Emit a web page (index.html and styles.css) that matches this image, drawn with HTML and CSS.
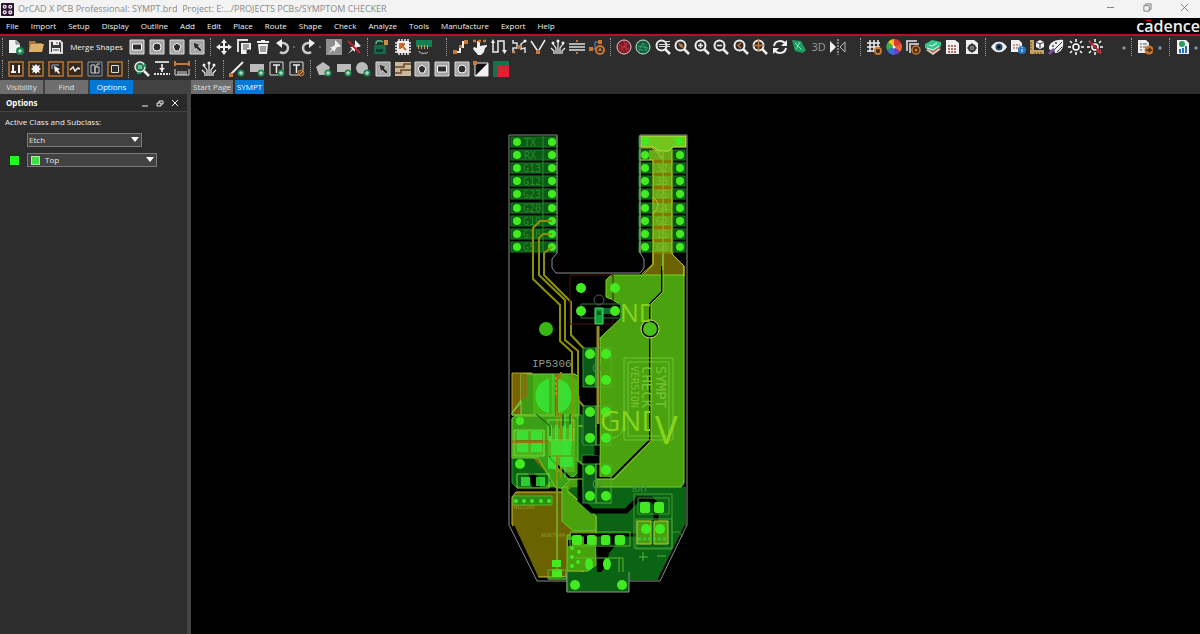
FILE: index.html
```html
<!DOCTYPE html>
<html lang="en">
<head>
  <meta charset="utf-8">
  <meta name="viewport" content="width=device-width, initial-scale=1">
  <link rel="stylesheet" href="styles.css">
  <title>OrCAD X PCB Professional: SYMPT.brd</title>
</head>
<body>

<!-- icon sprite -->
<svg class="sprite" aria-hidden="true">
  <symbol id="new" viewBox="0 0 16 16"><path class="w" d="M1 1h7l4 4v9H1z"/><path d="M8 1v4h4" fill="#bbb" stroke="#777"/><circle cx="12" cy="12" r="4" fill="#1b8a52"/><path class="ws" d="M12 10v4M10 12h4"/></symbol>
  <symbol id="open" viewBox="0 0 16 16"><path fill="#a9783c" d="M1 2h6l1 2h6v9H1z"/><path fill="#e0b068" d="M3 5h13l-2 8H1z"/></symbol>
  <symbol id="save" viewBox="0 0 16 16"><path fill="#3a3a3a" stroke="#ddd" stroke-width="2" d="M2 2h10l2 2v10H2z"/><path class="w" d="M5 2h6v4H5zM4 9h8v5H4z"/><path stroke="#444" d="M5 11h6M9 3v2"/></symbol>
  <symbol id="box" viewBox="0 0 16 16"><path fill="#a5a5a5" stroke="#ddd" d="M1 1h14v14H1z"/></symbol>
  <symbol id="b-rect" viewBox="0 0 16 16"><use href="#box"/><path fill="#2d2d2d" stroke="#fff" d="M3.500 5h9v6h-9z"/></symbol>
  <symbol id="b-circle" viewBox="0 0 16 16"><use href="#box"/><circle cx="8" cy="8" r="4" fill="#2d2d2d" stroke="#fff"/></symbol>
  <symbol id="b-penta" viewBox="0 0 16 16"><use href="#box"/><path fill="#2d2d2d" stroke="#fff" d="M8 4l4 3-2 5H6L4 7z"/></symbol>
  <symbol id="b-arrow" viewBox="0 0 16 16"><use href="#box"/><path fill="#2d2d2d" stroke="#fff" stroke-width=".5" d="M4 3l8 3-3 1 4 4-2 2-4-4-1 3z"/></symbol>
  <symbol id="move" viewBox="0 0 16 16"><path class="ws2" d="M8 2v12M2 8h12"/><path class="w" d="M8 0l3 4H5zM8 16l3-4H5zM0 8l4-3v6zM16 8l-4-3v6z"/></symbol>
  <symbol id="copy" viewBox="0 0 16 16"><path fill="none" stroke="#ddd" stroke-width="2" d="M2 13V1h10"/><path class="w" d="M5 4h10v7l-4 4H5z"/><path stroke="#444" d="M7 6h6M7 8h6M7 10h4M11 15v-4h4"/></symbol>
  <symbol id="trash" viewBox="0 0 16 16"><path class="w" d="M2 2h4V1h4v1h4v2H2zM3 5h10l-1 10H4z"/><path stroke="#555" d="M6 7v6M8 7v6M10 7v6"/></symbol>
  <symbol id="undo" viewBox="0 0 22 16"><path fill="none" stroke="#ccc" stroke-width="2.500" d="M5 4h3a5 5 0 1 1-3 9"/><path class="w" d="M1 4l6-4v9z"/><circle cx="19" cy="8" r="1" fill="#777"/></symbol>
  <symbol id="redo" viewBox="0 0 22 16"><path fill="none" stroke="#ccc" stroke-width="2.500" d="M10 4H7a5 5 0 1 0 3 9"/><path class="w" d="M14 4L8 0v9z"/><circle cx="19" cy="8" r="1" fill="#777"/></symbol>
  <symbol id="pin" viewBox="0 0 16 16"><path class="w" d="M9 1l6 6-2 1-2 0-2 3 0 2-2-2-5 4 4-5-2-2 2 0 3-2 0-3z"/></symbol>
  <symbol id="unpin" viewBox="0 0 16 16"><use href="#pin"/><path stroke="#c02030" stroke-width="2" d="M2 2l12 12"/></symbol>
  <symbol id="boardIcon" viewBox="0 0 16 16"><path fill="#17694a" d="M1 6h12v9H1z"/><path fill="#0b3f2c" d="M3 10h7v3H3z"/><path fill="#d08a4a" d="M11 1h4v5h-4z"/><path fill="none" stroke="#4fbf86" stroke-width="1.500" d="M3 5c0-4 4-4 7-2"/></symbol>
  <symbol id="chip" viewBox="0 0 16 16"><path stroke="#eee" stroke-width="1.500" d="M4 0v16M7 0v16M10 0v16M13 0v16M0 4h16M0 7h16M0 10h16M0 13h16"/><path class="w" d="M2 2h12v12H2z"/><path stroke="#d06a28" stroke-width="2" d="M5 5l6 6M5 10V5h5"/></symbol>
  <symbol id="module" viewBox="0 0 16 16"><path fill="#168055" d="M0 1h16v7H0z"/><path stroke="#e0a050" stroke-width="4" stroke-dasharray="1 2" d="M2 8h12"/><path fill="none" stroke="#ccc" d="M3 12c0 3 8 3 9 1"/></symbol>
  <symbol id="route" viewBox="0 0 16 16"><path fill="none" stroke="#eee" stroke-width="2" d="M3 13h5V8h3V3h3"/><path class="o" d="M1 11h4v4H1zM12 1h4v4h-4zM7 6h3v3H7z"/></symbol>
  <symbol id="slide" viewBox="0 0 16 16"><path class="w" d="M5 2h3v5l6-1c2 0 1 2-1 3l-1 4-3 3H6l-5-6 1-2 3 1z"/><path stroke="#c87832" stroke-width="2.500" stroke-dasharray="3 2" d="M1 2h15"/></symbol>
  <symbol id="tune" viewBox="0 0 16 16"><path fill="none" stroke="#eee" stroke-width="1.500" d="M2 2v11h5V2h6v10"/><path class="w" d="M0 4l2-4 2 4zM11 11h5l-2.500 4z"/></symbol>
  <symbol id="pair" viewBox="0 0 16 16"><path fill="none" stroke="#ddd" stroke-width="1.500" d="M2 14V9h4V4H2V1M14 14V9l-4 1V5l4-3"/><circle cx="3" cy="13" r="1.500" class="o"/><circle cx="8" cy="8" r="2" class="o"/><circle cx="14" cy="2" r="1.500" class="w"/></symbol>
  <symbol id="vee" viewBox="0 0 16 16"><path fill="none" stroke="#eee" stroke-width="1.500" d="M1 2l6 9 1 2 1-2 6-10"/><path class="o" d="M6 11h4v4H6z"/></symbol>
  <symbol id="fan" viewBox="0 0 16 16"><path fill="none" stroke="#eee" stroke-width="1.200" d="M8 15V3M6 15V9L3 5M10 15V9l3-4M4 15v-3L1 9M12 15v-3l3-3"/><circle cx="8" cy="2" r="1.500" class="w"/><circle cx="3" cy="4" r="1.500" class="w"/><circle cx="13" cy="4" r="1.500" class="w"/></symbol>
  <symbol id="lines" viewBox="0 0 16 16"><path stroke="#ddd" stroke-width="1.500" d="M0 5h16M0 8h16M0 11h16"/><path class="o" d="M7 1h2v2H7zM7 13h2v2H7z"/></symbol>
  <symbol id="rdelay" viewBox="0 0 16 16"><path fill="none" stroke="#5d8cd0" d="M2 10h4V3h5"/><path class="o" d="M0 8h4v4H0zM9 1h4v4H9z"/><circle cx="11" cy="11" r="4" fill="none" stroke="#c87832" stroke-width="2"/><path class="o" d="M11 8l2 4H9z"/></symbol>
  <symbol id="net-r" viewBox="0 0 16 16"><circle cx="8" cy="8" r="7" fill="#7d1b27" stroke="#e8c8c8"/><path stroke="#b83244" fill="none" d="M3 6l10 4M5 13l6-10M8 2l3 11M3 10l9-5"/></symbol>
  <symbol id="net-g" viewBox="0 0 16 16"><circle cx="8" cy="8" r="7" fill="#155c3c" stroke="#cde8d8"/><path stroke="#35a070" fill="none" d="M4 11l4-7 4 7zM3 7l10 2"/></symbol>
  <symbol id="lens" viewBox="0 0 16 16"><circle cx="6.500" cy="6.500" r="5" fill="none" stroke="#eee" stroke-width="2"/><path stroke="#eee" stroke-width="2.500" d="M10 10l5 5"/></symbol>
  <symbol id="z-fit" viewBox="0 0 16 16"><use href="#lens"/><path stroke="#ddd" d="M4 5.500h11M4 7.500h11M10 2.500h5"/></symbol>
  <symbol id="z-box" viewBox="0 0 16 16"><use href="#lens"/><path class="o" d="M4 4l4 1 2 4-4-1z"/></symbol>
  <symbol id="z-in" viewBox="0 0 16 16"><use href="#lens"/><path stroke="#eee" stroke-width="1.500" d="M6.500 4v5M4 6.500h5"/></symbol>
  <symbol id="z-out" viewBox="0 0 16 16"><use href="#lens"/><path stroke="#eee" stroke-width="1.500" d="M4 6.500h5"/></symbol>
  <symbol id="z-prev" viewBox="0 0 16 16"><use href="#lens"/><path fill="none" stroke="#d07838" stroke-width="1.500" d="M8 4L5 6.500 8 9"/></symbol>
  <symbol id="z-ctr" viewBox="0 0 16 16"><use href="#lens"/><path stroke="#c87832" stroke-width="1.500" d="M6.500 1v11M1 6.500h11"/></symbol>
  <symbol id="refresh" viewBox="0 0 16 16"><path fill="none" stroke="#eee" stroke-width="2" d="M2 7c1-6 8-6 11-3M14 9c-1 6-8 6-11 3"/><path class="w" d="M15 1v6H9zM1 15V9h6z"/></symbol>
  <symbol id="flipb" viewBox="0 0 16 16"><path fill="#1d9b62" d="M1 1l9 1 5 9-3 3-8-2z"/><path stroke="#7fe0b0" fill="none" d="M4 4l7 7M9 3l-4 7"/></symbol>
  <symbol id="mirror" viewBox="0 0 16 16"><path class="w" d="M0 2l6 6-6 6z"/><path fill="none" stroke="#bbb" d="M15 3l-5 5 5 5z"/><path stroke="#ddd" stroke-dasharray="2 1" d="M8 0v16"/></symbol>
  <symbol id="grid" viewBox="0 0 16 16"><path fill="none" stroke="#eee" stroke-width="1.500" d="M4 1v12M8 1v12M12 1v7M1 4h13M1 8h13M1 12h7"/><circle cx="12" cy="12" r="3" fill="#2d2d2d" stroke="#c87832" stroke-width="2"/></symbol>
  <symbol id="wheel" viewBox="0 0 16 16"><path fill="#e33a2e" d="M8 8V0a8 8 0 0 1 7 4z"/><path fill="#e86034" d="M8 8l7-4a8 8 0 0 1-1 9z"/><path fill="#6d3fd0" d="M8 8l6 5a8 8 0 0 1-6 3z"/><path fill="#2a73d8" d="M8 8v8a8 8 0 0 1-7-5z"/><path fill="#32b34a" d="M8 8l-7 3a8 8 0 0 1 1-8z"/><path fill="#f3c52b" d="M8 8L2 3a8 8 0 0 1 6-3z"/><circle cx="8" cy="8" r="1.500" fill="#eee"/></symbol>
  <symbol id="shadow" viewBox="0 0 16 16"><path fill="none" stroke="#bbb" stroke-width="2" d="M2 12V2h10M5 14V5h9"/><circle cx="11" cy="11" r="4" fill="#4a2f18" stroke="#c87832" stroke-width="1.500"/><circle cx="11" cy="11" r="1.500" class="o"/></symbol>
  <symbol id="layers" viewBox="0 0 16 16"><path fill="#e0d8c0" d="M1 11l8-3 7 2-8 6z"/><path fill="#c85f5a" d="M1 9l7-3 8 2-8 6z"/><path fill="#38c48a" d="M0 5l7-4 9 2v4l-8 5-8-3z"/><path stroke="#d9fff0" fill="none" d="M4 6l3 1 5-3M2 9l6 2 6-4"/></symbol>
  <symbol id="table" viewBox="0 0 16 16"><path class="w" d="M2 1h9l4 3v11H2z"/><path stroke="#a04030" stroke-width="1.500" d="M4 7h9M4 10h9M4 13h9" stroke-dasharray="2 1"/></symbol>
  <symbol id="docset" viewBox="0 0 16 16"><path class="w" d="M2 1h8l4 3v11H2z"/><circle cx="8" cy="9" r="3" fill="none" stroke="#333" stroke-width="2"/><path stroke="#333" d="M8 4v10M3 9h10"/></symbol>
  <symbol id="eye" viewBox="0 0 16 16"><path class="w" d="M0 8c4-7 12-7 16 0-4 7-12 7-16 0z"/><circle cx="8" cy="8" r="3.500" fill="#24486e"/><circle cx="8" cy="8" r="1.500" fill="#111"/></symbol>
  <symbol id="info" viewBox="0 0 16 16"><path class="w" d="M1 1h8l3 3v9H1z"/><path stroke="#a04030" d="M3 6h7M3 9h6" stroke-dasharray="2 1"/><circle cx="12" cy="11" r="4" fill="#2478c8"/><path class="ws" d="M12 10v3M12 8v1"/></symbol>
  <symbol id="ruler" viewBox="0 0 16 16"><path fill="#c8a060" d="M1 1h4v10h10v4H1z"/><path stroke="#553" d="M1 4h2M1 7h2M1 10h2M6 15v-2M9 15v-2M12 15v-2"/><path class="w" d="M11 1l4 2v5l-4 2-4-2V3z"/><path stroke="#333" fill="none" d="M7 3l4 2 4-2M11 5v4"/></symbol>
  <symbol id="brush" viewBox="0 0 16 16"><path class="w" d="M1 9c0-6 8-9 14-8 1 7-1 12-7 13-2 0-1-2-2-3-2 0-5 1-5-2z"/><path stroke="#333" d="M6 11l8-8M9 13l5-5"/><circle cx="5" cy="7" r="1" fill="#444"/><circle cx="8" cy="4" r="1" fill="#444"/><path stroke="#7a4fb0" stroke-width="2.500" d="M1 15l5-5"/></symbol>
  <symbol id="sun" viewBox="0 0 16 16"><circle cx="8" cy="8" r="3" fill="none" stroke="#fff" stroke-width="1.500"/><path stroke="#fff" stroke-width="1.500" d="M8 0v3M8 13v3M0 8h3M13 8h3M2 2l2 2M12 12l2 2M14 2l-2 2M4 12l-2 2"/></symbol>
  <symbol id="sunoff" viewBox="0 0 16 16"><use href="#sun"/><path stroke="#c02838" stroke-width="2" d="M2 2l12 12M10 14l4-3"/></symbol>
  <symbol id="export" viewBox="0 0 16 16"><path class="w" d="M1 1h8l3 3v10H1z"/><path stroke="#555" d="M3 5h2M3 8h2M3 11h2M6 5h4M6 8h3"/><circle cx="12" cy="11" r="4.500" fill="#c87832"/><path stroke="#4a2a10" stroke-width="1.500" fill="none" d="M9 11h5l-2-2M14 11l-2 2"/></symbol>
  <symbol id="report" viewBox="0 0 16 16"><path class="w" d="M2 1h9l3 3v11H2z"/><circle cx="7" cy="5" r="3" fill="#2a9a5a"/><path fill="#2a70c0" d="M4 10h2v4H4zM7 9h2v5H7zM10 7h2v7h-2z"/></symbol>

  <symbol id="ob" viewBox="0 0 16 16"><path fill="#35291f" stroke="#b87436" stroke-width="1.500" d="M1 1h14v14H1z"/></symbol>
  <symbol id="o-sym" viewBox="0 0 16 16"><use href="#ob"/><path class="w" d="M4 4h2v6H4zM3 10h5v2H3zM10 4h2v8h-2z"/></symbol>
  <symbol id="o-pad" viewBox="0 0 16 16"><use href="#ob"/><path class="w" d="M8 3l1.500 2L12 4l-1 2.500L13 8l-2 1.500 1 2.500-2.500-1L8 13l-1.500-2L4 12l1-2.500L3 8l2-1.500L4 4l2.500 1z"/></symbol>
  <symbol id="o-lasso" viewBox="0 0 16 16"><use href="#ob"/><path fill="none" stroke="#8fb0e0" d="M4 8V4h7"/><path class="w" d="M6 5l6 3-2 1 2 3-1 1-3-3-1 2z"/></symbol>
  <symbol id="o-wave" viewBox="0 0 16 16"><use href="#ob"/><path fill="none" stroke="#eee" stroke-width="1.500" d="M3 9l3-3 2 4 3-3 2 1"/></symbol>
  <symbol id="o-copy" viewBox="0 0 16 16"><path fill="#252b2e" stroke="#90989c" d="M1 1h14v14H1z"/><path fill="none" stroke="#ccc" d="M4 4h4v8H4zM8 6h4v6H8zM10 6V3h3"/></symbol>
  <symbol id="o-sq" viewBox="0 0 16 16"><use href="#ob"/><path fill="#2d2d2d" stroke="#ddd" d="M4.500 4.500h7v7h-7z"/></symbol>
  <symbol id="find" viewBox="0 0 16 16"><circle cx="6" cy="6" r="5" fill="#456a58" stroke="#ddf0e4" stroke-width="1.500"/><path stroke="#eee" stroke-width="2.500" d="M10 10l5 5"/><path fill="#49d28c" d="M4 4h4v4H4z"/><path stroke="#2aa060" stroke-width="2" d="M11 3v3M3 12h4"/></symbol>
  <symbol id="dim" viewBox="0 0 16 16"><path stroke="#fff" stroke-width="1.500" d="M1 1h14M8 3v8"/><path class="w" d="M8 10l3-3H5z"/><path stroke="#ddd" stroke-width="2" stroke-dasharray="2 1" d="M0 13h16"/></symbol>
  <symbol id="meas" viewBox="0 0 16 16"><path stroke="#c87832" stroke-width="2" d="M1 3h14"/><path class="o" d="M0 0h2v5H0zM14 0h2v5h-2z"/><path fill="none" stroke="#ddd" d="M1 8v6h14V8M4 10v4M6 10v4M8 10v4M10 10v4M12 10v4"/></symbol>
  <symbol id="plus" viewBox="0 0 16 16"><circle cx="12" cy="12" r="3.500" fill="#1b8a52"/><path class="ws" d="M12 10v4M10 12h4"/></symbol>
  <symbol id="a-line" viewBox="0 0 16 16"><path class="ws2" d="M2 13L14 1"/><path class="o" d="M0 12h4v4H0z"/><use href="#plus"/></symbol>
  <symbol id="a-rect" viewBox="0 0 16 16"><path fill="#bbb" d="M1 3h14v8H1z"/><use href="#plus"/></symbol>
  <symbol id="a-text" viewBox="0 0 16 16"><path fill="none" stroke="#ddd" d="M1 1h13v13H1z"/><path fill="none" stroke="#eee" stroke-width="1.500" d="M4 4h7M7.500 4v8"/><use href="#plus"/></symbol>
  <symbol id="a-edit" viewBox="0 0 16 16"><path fill="none" stroke="#ddd" d="M1 1h13v13H1z"/><path fill="none" stroke="#eee" stroke-width="1.500" d="M4 4h7M7.500 4v8"/><circle cx="12" cy="12" r="3" fill="#6a4520" stroke="#c87832"/><path stroke="#e0a060" d="M10 14l4-4"/></symbol>
  <symbol id="a-penta" viewBox="0 0 16 16"><path fill="#bbb" d="M7 1l7 5-3 8H3L0 6z"/><use href="#plus"/></symbol>
  <symbol id="a-circle" viewBox="0 0 16 16"><circle cx="7" cy="7" r="6" fill="#bbb"/><use href="#plus"/></symbol>
  <symbol id="stair" viewBox="0 0 16 16"><path fill="#c8b8a0" d="M0 1h16v14H0z"/><path fill="none" stroke="#6e4320" stroke-width="1.500" d="M0 6h9V3h7M0 12h6V9h10"/></symbol>
  <symbol id="contrast" viewBox="0 0 16 16"><path fill="#111" stroke="#eee" d="M2 2h13v13H2z"/><path class="w" d="M15 2v13H2z"/><path class="o" d="M0 0h4v4H0z"/></symbol>
  <symbol id="drc" viewBox="0 0 16 16"><path fill="#15734a" d="M0 0h16v16H0z"/><path fill="#e02030" d="M5 5h11v11H5z"/><path stroke="#a04030" d="M6 13L9 3M10 13l3-10"/></symbol>
</svg>

<header class="titlebar">
  <svg class="appIcon" viewBox="0 0 14 14"><rect width="14" height="14" rx="1" fill="#2b1530"/><g fill="none" stroke="#f0e8f0" stroke-width="1.500"><circle cx="4" cy="4" r="1.500"/><circle cx="10" cy="4" r="1.500"/><circle cx="4" cy="10" r="1.500"/><circle cx="10" cy="10" r="1.500"/></g></svg>
  <span class="title">OrCAD X PCB Professional: SYMPT.brd&nbsp; Project: E:.../PROJECTS PCBs/SYMPTOM CHECKER</span>
  <div class="windowBtns">
    <button aria-label="Minimize"><svg viewBox="0 0 10 10"><path d="M1 5h8"/></svg></button>
    <button aria-label="Restore"><svg viewBox="0 0 10 10"><path d="M1 3h6v6H1zM3 3V1h6v6H7"/></svg></button>
    <button aria-label="Close"><svg viewBox="0 0 10 10"><path d="M1 1l8 8M9 1L1 9"/></svg></button>
  </div>
</header>

<nav class="menubar">
  <a href="#">File</a><a href="#">Import</a><a href="#">Setup</a><a href="#">Display</a><a href="#">Outline</a><a href="#">Add</a><a href="#">Edit</a><a href="#">Place</a><a href="#">Route</a><a href="#">Shape</a><a href="#">Check</a><a href="#">Analyze</a><a href="#">Tools</a><a href="#">Manufacture</a><a href="#">Export</a><a href="#">Help</a>
  <span class="brand">c<span class="macron">a</span>dence</span>
</nav>

<div class="toolbars">
  <div class="toolbar mainTools">
    <div class="group">
      <button aria-label="New"><svg><use href="#new"/></svg></button>
      <button aria-label="Open"><svg><use href="#open"/></svg></button>
      <button aria-label="Save"><svg><use href="#save"/></svg></button>
      <button class="textBtn">Merge Shapes</button>
      <button aria-label="Merge rectangle"><svg><use href="#b-rect"/></svg></button>
      <button aria-label="Merge circle"><svg><use href="#b-circle"/></svg></button>
      <button aria-label="Merge polygon"><svg><use href="#b-penta"/></svg></button>
      <button aria-label="Merge select"><svg><use href="#b-arrow"/></svg></button>
    </div>
    <div class="group">
      <button aria-label="Move"><svg><use href="#move"/></svg></button>
      <button aria-label="Copy"><svg><use href="#copy"/></svg></button>
      <button aria-label="Delete"><svg><use href="#trash"/></svg></button>
      <button class="wide" aria-label="Undo"><svg><use href="#undo"/></svg></button>
      <button class="wide" aria-label="Redo"><svg><use href="#redo"/></svg></button>
      <button class="pressed" aria-label="Fix"><svg><use href="#pin"/></svg></button>
      <button aria-label="Unfix"><svg><use href="#unpin"/></svg></button>
    </div>
    <div class="group loose">
      <button aria-label="Place board"><svg><use href="#boardIcon"/></svg></button>
      <button aria-label="Place part"><svg><use href="#chip"/></svg></button>
      <button aria-label="Place module"><svg><use href="#module"/></svg></button>
    </div>
    <div class="group">
      <button aria-label="Add connect"><svg><use href="#route"/></svg></button>
      <button aria-label="Slide"><svg><use href="#slide"/></svg></button>
      <button aria-label="Delay tune"><svg><use href="#tune"/></svg></button>
      <button aria-label="Phase tune"><svg><use href="#pair"/></svg></button>
      <button aria-label="Vertex"><svg><use href="#vee"/></svg></button>
      <button aria-label="Fanout"><svg><use href="#fan"/></svg></button>
      <button aria-label="Spread"><svg><use href="#lines"/></svg></button>
      <button aria-label="Route options"><svg><use href="#rdelay"/></svg></button>
    </div>
    <div class="group loose">
      <button aria-label="Rats off"><svg><use href="#net-r"/></svg></button>
      <button aria-label="Rats on"><svg><use href="#net-g"/></svg></button>
      <button aria-label="Zoom fit"><svg><use href="#z-fit"/></svg></button>
      <button aria-label="Zoom window"><svg><use href="#z-box"/></svg></button>
      <button aria-label="Zoom in"><svg><use href="#z-in"/></svg></button>
      <button aria-label="Zoom out"><svg><use href="#z-out"/></svg></button>
      <button aria-label="Zoom previous"><svg><use href="#z-prev"/></svg></button>
      <button aria-label="Zoom center"><svg><use href="#z-ctr"/></svg></button>
      <button aria-label="Refresh"><svg><use href="#refresh"/></svg></button>
      <button aria-label="Flip board"><svg><use href="#flipb"/></svg></button>
      <button class="threeD">3D</button>
      <button aria-label="Mirror"><svg><use href="#mirror"/></svg></button>
    </div>
    <div class="group">
      <button aria-label="Grid"><svg><use href="#grid"/></svg></button>
      <button aria-label="Colors"><svg><use href="#wheel"/></svg></button>
      <button aria-label="Shadow"><svg><use href="#shadow"/></svg></button>
      <button aria-label="Cross section"><svg><use href="#layers"/></svg></button>
      <button aria-label="Constraints"><svg><use href="#table"/></svg></button>
      <button aria-label="Parameters"><svg><use href="#docset"/></svg></button>
    </div>
    <div class="group">
      <button aria-label="Visibility"><svg><use href="#eye"/></svg></button>
      <button aria-label="Show element"><svg><use href="#info"/></svg></button>
      <button aria-label="Measure"><svg><use href="#ruler"/></svg></button>
      <button aria-label="Assign color"><svg><use href="#brush"/></svg></button>
      <button aria-label="Highlight"><svg><use href="#sun"/></svg></button>
      <button aria-label="Dehighlight"><svg><use href="#sunoff"/></svg></button>
      <button class="more moreWide">»</button>
    </div>
    <div class="group">
      <button aria-label="Export"><svg><use href="#export"/></svg></button>
      <button class="more">»</button>
    </div>
    <div class="group">
      <button aria-label="Reports"><svg><use href="#report"/></svg></button>
      <button class="more">»</button>
    </div>
  </div>
  <div class="toolbar editTools">
    <div class="group">
      <button aria-label="Symbol edit"><svg><use href="#o-sym"/></svg></button>
      <button aria-label="Placement edit"><svg><use href="#o-pad"/></svg></button>
      <button aria-label="General edit"><svg><use href="#o-lasso"/></svg></button>
      <button aria-label="Signal"><svg><use href="#o-wave"/></svg></button>
      <button aria-label="Etch edit"><svg><use href="#o-copy"/></svg></button>
      <button aria-label="Shape edit"><svg><use href="#o-sq"/></svg></button>
    </div>
    <div class="group">
      <button aria-label="Find part"><svg><use href="#find"/></svg></button>
      <button aria-label="Dimension"><svg><use href="#dim"/></svg></button>
      <button aria-label="Linear dimension"><svg><use href="#meas"/></svg></button>
    </div>
    <div class="group">
      <button aria-label="Create fanout"><svg><use href="#fan"/></svg></button>
    </div>
    <div class="group">
      <button aria-label="Add line"><svg><use href="#a-line"/></svg></button>
      <button aria-label="Add rectangle"><svg><use href="#a-rect"/></svg></button>
      <button aria-label="Add text"><svg><use href="#a-text"/></svg></button>
      <button aria-label="Edit text"><svg><use href="#a-edit"/></svg></button>
    </div>
    <div class="group">
      <button aria-label="Shape polygon"><svg><use href="#a-penta"/></svg></button>
      <button aria-label="Shape rectangle"><svg><use href="#a-rect"/></svg></button>
      <button aria-label="Shape circle"><svg><use href="#a-circle"/></svg></button>
      <button aria-label="Select shape"><svg><use href="#b-arrow"/></svg></button>
      <button aria-label="Edit boundary"><svg><use href="#stair"/></svg></button>
      <button aria-label="Void polygon"><svg><use href="#b-penta"/></svg></button>
      <button aria-label="Void rectangle"><svg><use href="#b-rect"/></svg></button>
      <button aria-label="Void circle"><svg><use href="#b-circle"/></svg></button>
      <button aria-label="Invert"><svg><use href="#contrast"/></svg></button>
      <button aria-label="Update shapes"><svg><use href="#drc"/></svg></button>
    </div>
  </div>
</div>

<main class="workspace">
  <aside class="side">
    <div class="tabs">
      <button class="tab">Visibility</button>
      <button class="tab">Find</button>
      <button class="tab active">Options</button>
    </div>
    <section class="panel">
      <div class="panelHead">
        <h2>Options</h2>
        <button aria-label="Collapse"><svg viewBox="0 0 8 8"><path d="M1 7h6"/></svg></button>
        <button aria-label="Float"><svg viewBox="0 0 8 8"><path d="M1 4h4v3H1zM3 4V2h4v3H5"/></svg></button>
        <button aria-label="Close panel"><svg viewBox="0 0 8 8"><path d="M1 1l6 6M7 1L1 7"/></svg></button>
      </div>
      <div class="options">
        <label for="etchClass">Active Class and Subclass:</label>
        <div class="selectWrap classSelect">
          <select id="etchClass"><option>Etch</option></select>
        </div>
        <div class="subRow">
          <button class="swatch" aria-label="Layer color"></button>
          <div class="selectWrap subSelect">
            <select aria-label="Subclass"><option>Top</option></select>
          </div>
        </div>
      </div>
    </section>
  </aside>

  <section class="editor">
    <div class="tabs">
      <button class="tab doc">Start Page</button>
      <button class="tab doc active">SYMPT</button>
    </div>
    <svg class="board" viewBox="191 94 1009 540" role="img" aria-label="SYMPT board">
      <defs>
        <g id="pinRow">
          <rect x="2" y="-5" width="46" height="10" fill="#0a5b15" stroke="#1a7a25"/>
          <circle cx="8" cy="0" r="4"/><circle cx="43" cy="0" r="4"/>
        </g>
        <g id="sw">
          <rect x="583" y="-6" width="13" height="39" fill="#0b5a17" stroke="#2a9a30"/>
          <rect x="596" y="-6" width="15" height="39" fill="none" stroke="#54b030"/>
          <circle cx="590" cy="0" r="5"/><circle cx="606" cy="0" r="5"/>
          <circle cx="590" cy="26" r="5"/><circle cx="606" cy="26" r="5"/>
        </g>
        <clipPath id="netClip"><path d="M590 280h60v180h-60z"/></clipPath>
      </defs>

      <!-- bottom copper -->
      <path fill="#0b6314" d="M580 487h106v38l-27 55H548v-12l20-30V487z"/>
      <path fill="#0b6314" stroke="#2a9a30" d="M512 418l4-3h66v28h16v12h-16v32h-66l-4-4z"/>
      <path fill="#0b6314" d="M567 545h62v47h-62z"/>

      <!-- brown power shapes -->
      <path fill="#6b6200" stroke="#c8c030" d="M512 497l4-5h53l27 24v48l-14 8-20 5h-25l-25-53z"/>
      <path fill="#7a6208" stroke="#b0a020" d="M512 373h20v42h-20z"/>
      <path fill="#6b6200" stroke="#a8b018" d="M653 147h19v107l12 12v10h-42l11-11z"/>
      <path fill="#746c05" d="M531 456l30 33h10v-33z"/>

      <!-- top copper -->
      <path fill="#4aa30e" stroke="#70d428" d="M606 280l5-5h73v208l-3 4H600V338l21-20v-13l-8-5-7-3z"/>
      <path fill="#4aa30e" d="M545 487l8-9h48v9z"/>
      <path fill="#4aa30e" stroke="#6cc824" d="M562 487h6v5l28 24v15h-23l-11-10z"/>
      <path fill="#3f9a14" stroke="#82d83c" d="M521 415v-15l-9 13M512 413l9-10v-29h54l4 4v37h-67z"/>
      <path fill="#42b414" d="M533 375h34l10 5v34h-44z"/>
      <path fill="#3ba018" stroke="#6fc828" d="M512 419l4-3h62v56l-16 16h-6l-18-30h-26z"/>
      <path fill="#52b41c" d="M514 430h31v26h-31zM548 428h27v44h-18l-9-8z"/>
      <path fill="#48a20e" stroke="#6cc824" d="M567 535h29v30l-8 6h-21z"/>
      <path fill="#7c7410" d="M555 374h4v42h-4zM512 440h36v3h-36zM521 374h6v22l-6 6z"/>

      <!-- clearance channels -->
      <g fill="none" stroke="#000" stroke-width="5">
        <path d="M580 462v38l12 11h34l12-12h13l5 5v18"/>
        <path d="M571 535h67" stroke-width="3"/>
        <path d="M581 360v36M597 340v115"/>
      </g>
      <path d="M596 545h20l-7 8-2 10-6 10h-4zM528 473h6l6 6v8h-8zM568 540h4v6h-4zM584 536h3v8h-3zM611 536h3v9h-3z"/>
      <path fill="none" stroke="#000" stroke-width="2" d="M549 457l21 21h42l38-38V304l12-12v-26"/>
      <path fill="none" stroke="#000" stroke-width="3" d="M513 526l25 54M686 526l-27 54"/>
      <path fill="none" stroke="#8cd63a" d="M651 440V304l12-12V150M613 480l38-39M567 479h46"/>

      <!-- header strips -->
      <g class="pads">
        <use href="#pinRow" x="509" y="142"/><use href="#pinRow" x="509" y="155"/><use href="#pinRow" x="509" y="168"/>
        <use href="#pinRow" x="509" y="181"/><use href="#pinRow" x="509" y="194"/><use href="#pinRow" x="509" y="208"/>
        <use href="#pinRow" x="509" y="221"/><use href="#pinRow" x="509" y="234"/><use href="#pinRow" x="509" y="247"/>
        <use href="#pinRow" x="637" y="142"/><use href="#pinRow" x="637" y="155"/><use href="#pinRow" x="637" y="168"/>
        <use href="#pinRow" x="637" y="181"/><use href="#pinRow" x="637" y="194"/><use href="#pinRow" x="637" y="208"/>
        <use href="#pinRow" x="637" y="221"/><use href="#pinRow" x="637" y="234"/><use href="#pinRow" x="637" y="247"/>
      </g>
      <path fill="#857800" d="M653 147h19v107h-19z"/>
      <path fill="#68a814" d="M649 150h23v10h-23zM653 163h19v10h-19zM653 176h19v10h-19zM653 189h19v10h-19zM653 203h19v10h-19zM653 216h19v10h-19zM653 229h19v10h-19zM653 242h19v10h-19z"/>
      <path fill="#6ec81e" stroke="#c8e040" d="M641 136h45v11h-13l-4 4h-11l-4-4h-13z"/>
      <g class="pads"><circle cx="645" cy="141" r="4"/><circle cx="679" cy="141" r="4"/></g>
      <g fill="none" stroke="#c0cc20"><path d="M640 160h13v104l-11 10M641 148h12l9 10M672 254l12 12v10M672 150v104M653 197q10 8 0 17"/></g>
      <path fill="none" stroke="#78c828" d="M640 135v118M663 150v120"/>
      <path fill="none" stroke="#2c8a2c" d="M543 136v116"/>
      <g class="silk pinText">
        <text x="524" y="146">TX</text><text x="524" y="159">RX</text><text x="523" y="172">G13</text>
        <text x="523" y="185">G12</text><text x="523" y="198">G23</text><text x="523" y="212">G20</text>
        <text x="523" y="225">G19</text><text x="523" y="238">G18</text><text x="523" y="251">G5</text>
        <g class="pinRight"><text x="658" y="146">5V</text><text x="658" y="159">G</text><text x="656" y="172">32</text><text x="656" y="185">33</text>
        <text x="656" y="198">G5</text><text x="656" y="212">G4</text><text x="656" y="225">G2</text><text x="656" y="238">15</text><text x="656" y="251">G0</text></g>
      </g>

      <!-- traces -->
      <g fill="none" stroke="#8c9006" stroke-width="2">
        <path d="M552 221h-12l-7 7v51l27 26v36l12 11v90M552 234h-9l-4 4v37l26 25v40l13 11v49l10 11"/>
        <path d="M552 247l-8 6v22l27 27v33l17 18M561 372v106M557 412v160"/>
      </g>
      <path stroke="#9a8a30" stroke-width="3" d="M598 326v98"/>
      <path fill="none" stroke="#5fa51a" stroke-width="2" d="M577 426h20M572 456l18 14"/>
      <path fill="none" stroke="#48d848" d="M553 374v40M565 414v64M571 416v30"/>

      <!-- switch and connector area -->
      <path fill="none" stroke="#4a1014" d="M570 275h43v49h-43z"/>
      <path fill="none" stroke="#2c7c2c" d="M581 304h40v14h-40z"/>
      <circle cx="599" cy="300" r="5" fill="none" stroke="#555"/>
      <path fill="#086a30" d="M595 308h20v6h-20z"/>
      <path fill="#11a03c" stroke="#48e060" d="M595 308h8v16h-8z"/>
      <path fill="#0c5a20" d="M597 311h4v4h-4z"/>
      <g class="pads">
        <circle cx="581" cy="288" r="5"/><circle cx="615" cy="288" r="5"/><circle cx="581" cy="311" r="5"/><circle cx="615" cy="311" r="5"/>
        <use href="#sw" y="354"/><use href="#sw" y="412"/><use href="#sw" y="470"/>
      </g>
      <circle cx="597" cy="368" r="4" fill="none" stroke="#4a9a30"/><circle cx="597" cy="484" r="4" fill="none" stroke="#4a9a30"/>
      <circle cx="546" cy="329" r="7" fill="#39b715"/>
      <circle cx="650" cy="329" r="9" fill="#000" stroke="#b8e060"/><circle cx="650" cy="329" r="7" fill="#4bc01a"/>

      <!-- charger IC -->
      <g fill="#36e83a" fill-opacity=".8">
        <path d="M549 379v34c-18-3-18-31 0-34zM558 379v34c18-3 18-31 0-34z"/>
        <rect x="517" y="431" width="11" height="9"/><rect x="531" y="431" width="11" height="9"/>
        <rect x="517" y="443" width="11" height="9"/><rect x="531" y="443" width="11" height="9"/>
        <rect x="551" y="441" width="20" height="14"/><rect x="549" y="425" width="3" height="16"/><rect x="555" y="425" width="3" height="16"/>
        <rect x="563" y="425" width="3" height="16"/><rect x="569" y="425" width="3" height="16"/>
        <rect x="548" y="457" width="8" height="12"/><rect x="560" y="457" width="13" height="10"/>
        <rect x="521" y="477" width="9" height="9"/><rect x="536" y="477" width="9" height="9"/>
      </g>
      <path fill="none" stroke="#6ade38" d="M514 430h30v26h-30zM548 420h26v20h-26zM517 474h32v14h-32z"/>
      <path fill="none" stroke="#b07018" d="M512 442h36M557 374v40"/>
      <path fill="none" stroke="#0b4a10" d="M536 414l14 12v10M563 414v12M570 414v10"/>
      <path fill="none" stroke="#d08020" stroke-width="2" stroke-dasharray="3 2" d="M556 377v20"/>
      <g class="pads"><circle cx="520" cy="421" r="4"/><circle cx="520" cy="464" r="5"/></g>

      <!-- lower left test points and USB -->
      <path fill="#2a8d16" stroke="#55b42a" d="M513 496h39v9h-39z"/>
      <g class="pads">
        <circle cx="516" cy="501" r="2"/><circle cx="524" cy="501" r="2"/><circle cx="532" cy="501" r="2"/><circle cx="541" cy="501" r="2"/><circle cx="549" cy="501" r="2"/>
        <rect x="572" y="535" width="10" height="10" rx="2"/><rect x="587" y="535" width="9" height="10" rx="2"/><rect x="601" y="535" width="9" height="10" rx="2"/><rect x="615" y="535" width="10" height="10" rx="2"/>
        <ellipse cx="589" cy="564" rx="4" ry="6"/><ellipse cx="607" cy="564" rx="4" ry="6"/>
        <rect x="552" y="560" width="9" height="7"/><rect x="552" y="569" width="10" height="8"/>
        <circle cx="572" cy="548" r="2"/><circle cx="579" cy="552" r="2"/><circle cx="572" cy="557" r="2"/><circle cx="578" cy="562" r="2"/><circle cx="572" cy="566" r="2"/>
        <rect x="640" y="502" width="10" height="11" rx="2"/><rect x="654" y="502" width="10" height="11" rx="2"/>
      </g>
      <path fill="none" stroke="#58b82c" d="M567 592v-22M575 558h48v22M548 570h18v9h-18zM570 532h60v14h-60zM557 480v80M619 558v22"/>
      <path fill="#0b6314" stroke="#8a9a8a" d="M567 572v20h62v-20"/>
      <g class="pads"><circle cx="575" cy="585" r="5"/><circle cx="622" cy="585" r="5"/></g>

      <!-- battery connector -->
      <path fill="none" stroke="#3da034" d="M634 494h38v54h-38zM638 498h31v16h-31zM672 533q8-4 10 4M636 519h36v30h-36z"/>
      <path fill="#4b9e10" stroke="#b8d030" d="M637 521h14v23h-14zM654 521h14v23h-14z"/>
      <g class="pads"><circle cx="646" cy="529" r="5"/><circle cx="660" cy="529" r="5"/></g>
      <path stroke="#3cc838" stroke-width="3" stroke-dasharray="3 2" d="M638 539h30"/>
      <path stroke="#50b838" d="M643 552v9M639 557h9M657 556h9"/>

      <!-- legend silk -->
      <g fill="none" stroke="#6cc238"><path d="M624 358h49v82h-49zM628 362h41v74h-41zM603 440q20-2 20-12"/></g>
      <g class="silk">
        <text x="532" y="367" class="refdes">IP5306</text>
        <text x="632" y="492" class="batText">BAT</text>
        <text x="514" y="509" class="tiny">MIC5205</text>
        <text x="541" y="537" class="tiny">AO3CT600</text>
        <text transform="translate(656 366) rotate(90)" class="legend">SYMPT</text>
        <text transform="translate(642 366) rotate(90)" class="legend">CHECK</text>
        <text transform="translate(631 366) rotate(90)" class="version">VERSION</text>
      </g>
      <g class="net" clip-path="url(#netClip)"><text x="620" y="322" class="netTop">ND</text><text x="600" y="431">GND</text></g>
      <text x="655" y="444" class="netV">V</text>

      <!-- board outline -->
      <path fill="none" stroke="#8a8f8a" d="M509 135h48v118l-5 6v9l4 5h84l4-5v-9l-4-6V135h47v390l-27 56h-31M567 581h-30l-28-56V135"/>
    </svg>
  </section>
</main>

</body>
</html>
```
FILE: styles.css
```css
* {
  box-sizing: border-box;
}

html, body {
  height: 100%;
}

body {
  margin: 0;
  display: flex;
  flex-direction: column;
  overflow: hidden;
  background-color: #2d2d2d;
  color: #f0f0f0;
  font-family: 'Open Sans', 'Noto Sans', sans-serif;
  font-size: 8px;
  line-height: 12px;
}

button {
  margin: 0;
  padding: 0;
  border: 0;
  background: none;
  color: inherit;
  font: inherit;
}

.sprite {
  position: absolute;
  width: 0;
  height: 0;
}

.w { fill: #f0f0f0; }
.o { fill: #c87832; }
.ws { fill: none; stroke: #f0f0f0; stroke-width: 1; }
.ws2 { fill: none; stroke: #f0f0f0; stroke-width: 2; }

/* title bar */
.titlebar {
  flex: none;
  display: flex;
  align-items: center;
  height: 18px;
  padding-left: 1px;
  background-color: #f3f3f3;
  color: #8a8a8a;
  font-size: 9px;
}

.appIcon {
  width: 13px;
  height: 13px;
  margin-right: 4px;
}

.title {
  flex: 1;
  white-space: nowrap;
}

.windowBtns {
  display: flex;
  gap: 5px;
}

.windowBtns button {
  width: 32px;
  height: 18px;
}

.windowBtns svg {
  width: 9px;
  height: 9px;
  fill: none;
  stroke: #777;
}

/* menu */
.menubar {
  flex: none;
  display: flex;
  align-items: center;
  gap: 12px;
  height: 18px;
  padding-left: 6px;
  background-color: #000;
  border-bottom: 2px solid #b01228;
}

.menubar a {
  color: #f0f0f0;
  text-decoration: none;
}

.brand {
  margin-left: auto;
  font-size: 16px;
  font-weight: 600;
  line-height: 16px;
}

.macron {
  position: relative;
  display: inline-block;
}

.macron::before {
  content: '';
  position: absolute;
  top: 2px;
  left: 2px;
  width: 5px;
  height: 1px;
  background-color: #e01434;
}

/* toolbars */
.toolbars {
  flex: none;
  padding-left: 2px;
}

.toolbar {
  display: grid;
  height: 22px;
}

.mainTools {
  grid-template-columns: 208px 157px 79px 164px 250px 125px 146px 38px 36px;
}

.editTools {
  grid-template-columns: 126px 67px 28px 87px 204px;
}

.group {
  display: flex;
  align-items: center;
  justify-content: space-between;
  height: 18px;
  margin-top: 2px;
  padding: 0 5px;
  border-left: 1px dotted #9a9a9a;
}

.group.loose {
  padding-right: 14px;
}

.group button {
  flex: none;
  width: 16px;
  height: 16px;
}

.group svg {
  display: block;
  width: 100%;
  height: 100%;
}

.group .wide {
  width: 22px;
}

.group .textBtn {
  width: 58px;
  white-space: nowrap;
}

.group .pressed {
  background-color: #8f8f8f;
}

.group .threeD {
  color: #999;
  font-size: 11px;
}

.group .more {
  width: 8px;
}

.group .moreWide {
  width: 20px;
  text-align: right;
}

/* workspace */
.workspace {
  flex: 1;
  display: flex;
  min-height: 0;
}

.side {
  flex: none;
  display: flex;
  flex-direction: column;
  width: 191px;
}

.tabs {
  flex: none;
  display: flex;
  gap: 2px;
  height: 14px;
}

.side .tabs {
  background-color: #424242;
}

.tab {
  width: 43px;
  background-color: #6e6e6e;
  color: #e0e0e0;
}

.tab.active {
  background-color: #0078d7;
  color: #fff;
}

.tab.doc {
  width: auto;
  padding: 0 2px;
}

.panel {
  flex: 1;
  border-right: 4px solid #444;
}

.panelHead {
  display: flex;
  align-items: center;
  gap: 7px;
  height: 18px;
  padding: 0 8px 0 6px;
  border-bottom: 1px solid #444;
  background-color: #292929;
}

.panelHead h2 {
  flex: 1;
  margin: 0;
  font-size: 8px;
  color: #fff;
}

.panelHead svg {
  display: block;
  width: 8px;
  height: 8px;
  fill: none;
  stroke: #eee;
}

.options {
  padding: 4px 5px;
}

.options label {
  display: block;
}

.selectWrap {
  position: relative;
  height: 14px;
}

.selectWrap::after {
  content: '';
  position: absolute;
  top: 4px;
  right: 3px;
  border: 4px solid transparent;
  border-top: 5px solid #fff;
  border-bottom: 0;
}

.selectWrap select {
  display: block;
  width: 100%;
  height: 100%;
  padding: 0 0 0 1px;
  appearance: none;
  background-color: #424242;
  border: 1px solid #7a7a7a;
  border-radius: 0;
  color: #e8e8e8;
  font: inherit;
}

.classSelect {
  width: 115px;
  margin: 5px 0 6px 22px;
}

.subRow {
  display: flex;
  align-items: center;
  gap: 7px;
  padding-left: 4px;
}

.swatch {
  width: 11px;
  height: 11px;
  background-color: #1fff1f;
  border: 1px solid #0a3d0a;
}

.subSelect {
  width: 130px;
}

.subSelect select {
  padding-left: 17px;
}

.subSelect::before {
  content: '';
  position: absolute;
  top: 3px;
  left: 4px;
  width: 7px;
  height: 7px;
  background-color: #3fe03f;
  border: 1px solid #a0f0a0;
}

/* board view */
.editor {
  flex: 1;
  display: flex;
  flex-direction: column;
  min-width: 0;
}

.board {
  flex: 1;
  min-height: 0;
  width: 100%;
  background-color: #000;
}

.pads {
  fill: #42ea20;
}

.silk {
  font-family: 'DejaVu Sans Mono', monospace;
}

.pinText {
  font-size: 10px;
  fill: #2f8a28;
}

.pinRight {
  fill: #8ab828;
}

.refdes {
  font-family: 'Liberation Mono', monospace;
  font-size: 11px;
  fill: #8a9a8a;
}

.batText {
  font-size: 9px;
  fill: #3c9440;
}

.tiny {
  font-size: 5px;
  fill: #97a030;
}

.legend {
  font-size: 14px;
  fill: #78c238;
}

.version {
  font-size: 10px;
  fill: #78c238;
}

.net, .netV {
  font-family: 'Open Sans', sans-serif;
  fill: #88d41c;
}

.net {
  font-size: 28px;
}

.netTop {
  font-size: 25px;
}

.netV {
  font-size: 38px;
}
```
